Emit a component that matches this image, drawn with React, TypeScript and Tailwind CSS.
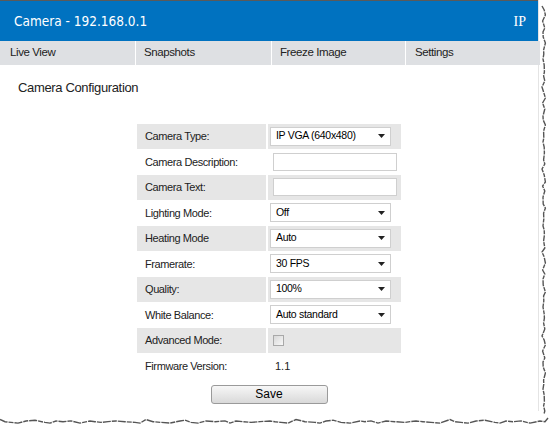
import React from 'react';

/* ── config rows ── */
type Row = {
  label: string;
  kind: 'select' | 'text' | 'check' | 'static';
  value?: string;
};

const ROWS: Row[] = [
  { label: 'Camera Type:', kind: 'select', value: 'IP VGA (640x480)' },
  { label: 'Camera Description:', kind: 'text' },
  { label: 'Camera Text:', kind: 'text' },
  { label: 'Lighting Mode:', kind: 'select', value: 'Off' },
  { label: 'Heating Mode', kind: 'select', value: 'Auto' },
  { label: 'Framerate:', kind: 'select', value: '30 FPS' },
  { label: 'Quality:', kind: 'select', value: '100%' },
  { label: 'White Balance:', kind: 'select', value: 'Auto standard' },
  { label: 'Advanced Mode:', kind: 'check' },
  { label: 'Firmware Version:', kind: 'static', value: '1.1' },
];

const NAV = ['Live View', 'Snapshots', 'Freeze Image', 'Settings'];

// jagged "torn paper" edges
const rightEdge = (() => {
  const pts: string[] = [];
  let y = 6;
  let i = 0;
  while (y < 414) {
    const x = 4 + ((i * 7) % 5) * 0.6 - (i % 3 === 0 ? 1 : 0);
    pts.push(`${x},${y}`);
    y += 4 + (i % 4);
    i++;
  }
  pts.push('5,414');
  return pts.join(' ');
})();

const bottomEdge = (() => {
  const pts: string[] = [];
  let x = 0;
  let i = 0;
  while (x < 548) {
    const y = 5 + ((i * 5) % 4) * 0.7 - (i % 5 === 0 ? 1.5 : 0);
    pts.push(`${x},${y}`);
    x += 5 + (i % 6);
    i++;
  }
  pts.push('548,2');
  return pts.join(' ');
})();

const Field = ({ row }: { row: Row }) => {
  if (row.kind === 'select') {
    return (
      <div className="w-[121px] h-[19px] border border-[#cfcfcf] bg-white flex items-center justify-between pl-[5px] pr-[5px] text-[10.5px] tracking-[-0.3px] text-black">
        <span>{row.value}</span>
        <svg width="7" height="4" viewBox="0 0 7 4">
          <path d="M0 0h7L3.5 4z" fill="#222" />
        </svg>
      </div>
    );
  }
  if (row.kind === 'text') {
    return <div className="w-[124px] h-[18px] ml-[3px] border border-[#cfcfcf] bg-white" />;
  }
  if (row.kind === 'check') {
    return <div className="w-[11px] h-[11px] ml-[3px] border border-[#a9a9a9] bg-gradient-to-br from-[#d8d8d8] to-[#f8f8f8]" />;
  }
  return <span className="ml-[5px] text-[11px] text-[#222]">{row.value}</span>;
};

const App = () => {
  return (
    <div className="w-[554px] h-[424px] bg-white font-['Liberation_Sans',Arial,sans-serif] overflow-hidden">
      <div className="flex">
        {/* page */}
        <div className="w-[539px] h-[411px] border-r border-[#e4e4e4] flex flex-col">
          <div className="h-[1px] bg-[#5a5a5a]" />
          <header className="h-[40px] bg-[#0072c0] flex items-center justify-between pl-[14px] pr-[12px] text-white">
            <span className="text-[13.5px] font-['Tahoma','DejaVu_Sans_Condensed','Liberation_Sans',sans-serif]">Camera - 192.168.0.1</span>
            <span className="text-[14px] font-['Liberation_Serif',serif]">IP</span>
          </header>

          {/* nav */}
          <nav className="h-[24px] grid grid-cols-[135px_135px_133px_134px] gap-x-[1px] bg-white">
            {NAV.map((n, i) => (
              <div
                key={n}
                className={`bg-[#dee0e3] flex items-center text-[11.5px] tracking-[-0.4px] text-[#222] ${i === 0 ? 'pl-[10px]' : i === 3 ? 'pl-[9px]' : 'pl-[8px]'}`}
              >
                {n}
              </div>
            ))}
          </nav>

          <h2 className="mt-[13px] ml-[18px] text-[13px] tracking-[-0.35px] text-[#222]">Camera Configuration</h2>

          {/* config table */}
          <div className="mt-[26px] ml-[137px] w-[264px] flex flex-col">
            {ROWS.map((row, i) => (
              <div key={row.label} className="flex h-[25.5px] gap-x-[2px]">
                <div className={`w-[129px] flex items-center pl-[8px] text-[11px] tracking-[-0.4px] text-[#222] ${i % 2 === 0 ? 'bg-[#e6e6e6]' : ''}`}>
                  {row.label}
                </div>
                <div className={`flex-1 flex items-center pl-[2px] ${i % 2 === 0 ? 'bg-[#e6e6e6]' : ''}`}>
                  <Field row={row} />
                </div>
              </div>
            ))}
          </div>

          <div className="ml-[137px] w-[264px] flex justify-center mt-[6px]">
            <button className="w-[117px] h-[19px] rounded-[3px] border border-[#9a9a9a] bg-gradient-to-b from-[#f7f7f7] to-[#d9d9d9] text-[12px] text-black leading-none">
              Save
            </button>
          </div>
        </div>

        {/* torn right edge */}
        <svg width="15" height="416" className="shrink-0">
          <polyline points={rightEdge} fill="none" stroke="#555" strokeWidth="1.4" strokeDasharray="6 1 4 1" />
        </svg>
      </div>

      {/* torn bottom edge */}
      <svg width="554" height="13">
        <polyline points={bottomEdge} fill="none" stroke="#555" strokeWidth="1.4" strokeDasharray="8 1 5 1" />
      </svg>
    </div>
  );
};

export default App;
